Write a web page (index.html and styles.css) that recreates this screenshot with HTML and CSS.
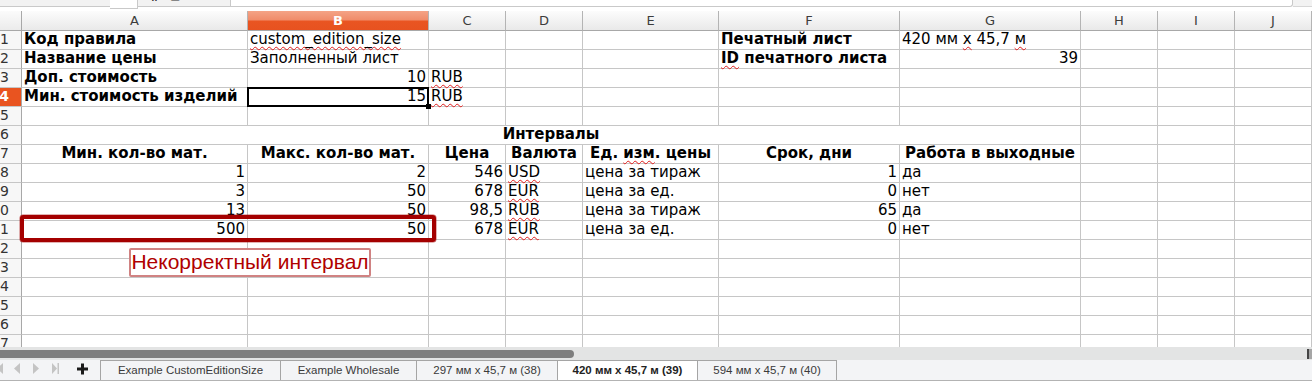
FILE: index.html
```html
<!DOCTYPE html>
<html lang="ru">
<head>
<meta charset="utf-8">
<title>Calc</title>
<link rel="stylesheet" href="styles.css">
</head>
<body>
<div class="top">
  <div class="top-left"></div>
  <div class="top-box"></div>
  <div class="top-gap"><span class="top-icons">#&nbsp;&nbsp;≡</span></div>
  <div class="top-input"></div>
  <div class="top-end"></div>
</div>

<div class="sheet">
  <div class="grid">
    <!-- header -->
    <div class="corner"></div>
    <div class="ch">A</div>
    <div class="ch ch-sel">B</div>
    <div class="ch">C</div>
    <div class="ch">D</div>
    <div class="ch">E</div>
    <div class="ch">F</div>
    <div class="ch">G</div>
    <div class="ch">H</div>
    <div class="ch">I</div>
    <div class="ch">J</div>

    <!-- row 1 -->
    <div class="rh"><span>1</span></div>
    <div class="c b">Код правила</div>
    <div class="c"><span class="sp">custom_edition_size</span></div>
    <div class="c"></div><div class="c"></div><div class="c"></div>
    <div class="c b">Печатный лист</div>
    <div class="c">420 мм <span class="sp">x</span> 45,7 <span class="sp">м</span></div>
    <div class="c"></div><div class="c"></div><div class="c"></div>

    <!-- row 2 -->
    <div class="rh"><span>2</span></div>
    <div class="c b">Название цены</div>
    <div class="c">Заполненный лист</div>
    <div class="c"></div><div class="c"></div><div class="c"></div>
    <div class="c b"><span class="sp">ID</span> печатного листа</div>
    <div class="c r">39</div>
    <div class="c"></div><div class="c"></div><div class="c"></div>

    <!-- row 3 -->
    <div class="rh"><span>3</span></div>
    <div class="c b">Доп. стоимость</div>
    <div class="c r">10</div>
    <div class="c"><span class="sp">RUB</span></div>
    <div class="c"></div><div class="c"></div><div class="c"></div><div class="c"></div>
    <div class="c"></div><div class="c"></div><div class="c"></div>

    <!-- row 4 -->
    <div class="rh rh-sel"><span>4</span></div>
    <div class="c b">Мин. стоимость изделий</div>
    <div class="c r cur">15<div class="cursor"><div class="handle"></div></div></div>
    <div class="c"><span class="sp">RUB</span></div>
    <div class="c"></div><div class="c"></div><div class="c"></div><div class="c"></div>
    <div class="c"></div><div class="c"></div><div class="c"></div>

    <!-- row 5 -->
    <div class="rh"><span>5</span></div>
    <div class="c"></div><div class="c"></div><div class="c"></div><div class="c"></div><div class="c"></div>
    <div class="c"></div><div class="c"></div><div class="c"></div><div class="c"></div><div class="c"></div>

    <!-- row 6 -->
    <div class="rh"><span>6</span></div>
    <div class="c b ctr merged">Интервалы</div>
    <div class="c"></div><div class="c"></div><div class="c"></div>

    <!-- row 7 -->
    <div class="rh"><span>7</span></div>
    <div class="c b ctr">Мин. кол-во мат.</div>
    <div class="c b ctr">Макс. кол-во мат.</div>
    <div class="c b ctr">Цена</div>
    <div class="c b ctr">Валюта</div>
    <div class="c b ctr">Ед. <span class="sp">изм</span>. цены</div>
    <div class="c b ctr">Срок, дни</div>
    <div class="c b ctr">Работа в выходные</div>
    <div class="c"></div><div class="c"></div><div class="c"></div>

    <!-- row 8 -->
    <div class="rh"><span>8</span></div>
    <div class="c r">1</div>
    <div class="c r">2</div>
    <div class="c r">546</div>
    <div class="c"><span class="sp">USD</span></div>
    <div class="c">цена за тираж</div>
    <div class="c r">1</div>
    <div class="c">да</div>
    <div class="c"></div><div class="c"></div><div class="c"></div>

    <!-- row 9 -->
    <div class="rh"><span>9</span></div>
    <div class="c r">3</div>
    <div class="c r">50</div>
    <div class="c r">678</div>
    <div class="c"><span class="sp">EUR</span></div>
    <div class="c">цена за ед.</div>
    <div class="c r">0</div>
    <div class="c">нет</div>
    <div class="c"></div><div class="c"></div><div class="c"></div>

    <!-- row 10 -->
    <div class="rh"><span>10</span></div>
    <div class="c r">13</div>
    <div class="c r">50</div>
    <div class="c r">98,5</div>
    <div class="c"><span class="sp">RUB</span></div>
    <div class="c">цена за тираж</div>
    <div class="c r">65</div>
    <div class="c">да</div>
    <div class="c"></div><div class="c"></div><div class="c"></div>

    <!-- row 11 -->
    <div class="rh"><span>11</span></div>
    <div class="c r">500</div>
    <div class="c r">50</div>
    <div class="c r">678</div>
    <div class="c"><span class="sp">EUR</span></div>
    <div class="c">цена за ед.</div>
    <div class="c r">0</div>
    <div class="c">нет</div>
    <div class="c"></div><div class="c"></div><div class="c"></div>

    <!-- rows 12-17 -->
    <div class="rh"><span>12</span></div>
    <div class="c"></div><div class="c"></div><div class="c"></div><div class="c"></div><div class="c"></div>
    <div class="c"></div><div class="c"></div><div class="c"></div><div class="c"></div><div class="c"></div>
    <div class="rh"><span>13</span></div>
    <div class="c"></div><div class="c"></div><div class="c"></div><div class="c"></div><div class="c"></div>
    <div class="c"></div><div class="c"></div><div class="c"></div><div class="c"></div><div class="c"></div>
    <div class="rh"><span>14</span></div>
    <div class="c"></div><div class="c"></div><div class="c"></div><div class="c"></div><div class="c"></div>
    <div class="c"></div><div class="c"></div><div class="c"></div><div class="c"></div><div class="c"></div>
    <div class="rh"><span>15</span></div>
    <div class="c"></div><div class="c"></div><div class="c"></div><div class="c"></div><div class="c"></div>
    <div class="c"></div><div class="c"></div><div class="c"></div><div class="c"></div><div class="c"></div>
    <div class="rh"><span>16</span></div>
    <div class="c"></div><div class="c"></div><div class="c"></div><div class="c"></div><div class="c"></div>
    <div class="c"></div><div class="c"></div><div class="c"></div><div class="c"></div><div class="c"></div>
    <div class="rh"><span>17</span></div>
    <div class="c"></div><div class="c"></div><div class="c"></div><div class="c"></div><div class="c"></div>
    <div class="c"></div><div class="c"></div><div class="c"></div><div class="c"></div><div class="c"></div>
  </div>

  <div class="err-box"></div>
  <div class="err-label">Некорректный интервал</div>
</div>

<div class="hscroll">
  <div class="thumb"></div>
  <div class="hscroll-end"></div>
</div>

<div class="tabs">
  <div class="nav">
    <svg width="100" height="20" viewBox="0 0 100 20">
      <polygon points="3,3 3,14 -3,8.5" fill="#c4c4c4"/>
      <polygon points="20,3 20,14 14,8.5" fill="#c4c4c4"/>
      <polygon points="33,3 33,14 39,8.5" fill="#c4c4c4"/>
      <polygon points="52,3 52,14 57,8.5" fill="#c4c4c4"/>
      <rect x="57.5" y="3" width="1.5" height="11" fill="#c4c4c4"/>
      <rect x="77" y="7.5" width="11" height="3" fill="#1a1a1a"/>
      <rect x="81" y="3.5" width="3" height="11" fill="#1a1a1a"/>
    </svg>
  </div>
  <div class="tab tab-first w180">Example CustomEditionSize</div>
  <div class="tab w136">Example Wholesale</div>
  <div class="tab w141">297 мм x 45,7 м (38)</div>
  <div class="tab tab-active w140">420 мм x 45,7 м (39)</div>
  <div class="tab w139">594 мм x 45,7 м (40)</div>
</div>
</body>
</html>
```

FILE: styles.css
```css
* { box-sizing: border-box; }

html, body {
  margin: 0;
  padding: 0;
  width: 1312px;
  height: 381px;
  overflow: hidden;
  background: #ffffff;
  font-family: "DejaVu Sans", sans-serif;
}

/* top strip (bottom of formula bar) */
.top {
  display: flex;
  height: 11px;
  background: #ffffff;
}
.top-left {
  width: 110px;
  height: 7px;
  background: #f2f2f2;
  border-bottom: 1px solid #c9c9c9;
}
.top-box {
  width: 28px;
  height: 9px;
  background: #ffffff;
  border-right: 1px solid #c9c9c9;
  border-bottom: 1px solid #c9c9c9;
}
.top-gap {
  width: 92px;
  height: 7px;
  background: #f2f2f2;
  border-bottom: 1px solid #c9c9c9;
  overflow: hidden;
  position: relative;
}
.top-icons {
  display: block;
  margin-left: 12px;
  margin-top: -10px;
  font-size: 13px;
  font-weight: bold;
  line-height: 13px;
  color: #333;
}
.top-input {
  width: 1063px;
  height: 7px;
  background: #ffffff;
  border-bottom: 1px solid #c9c9c9;
  border-left: 1px solid #c9c9c9;
  border-right: 1px solid #c9c9c9;
  border-bottom-right-radius: 3px;
}
.top-end {
  flex: 1;
  height: 7px;
  background: #f2f2f2;
  border-bottom: 1px solid #d6d6d6;
}

/* sheet grid */
.sheet {
  position: relative;
  height: 336px;
  overflow: hidden;
}
.grid {
  display: grid;
  grid-template-columns: 22px 226px 181px 77px 77px 136px 181px 181px 77px 77px 77px;
  grid-template-rows: 20px;
  grid-auto-rows: 19px;
}

.corner {
  background: linear-gradient(#fbfbfb, #ebebeb);
  border-right: 1px solid #a8a8a8;
  border-bottom: 1px solid #a8a8a8;
}
.ch {
  background: linear-gradient(#fcfcfc, #e9e9e9);
  border-right: 1px solid #b4b4b4;
  border-bottom: 1px solid #a8a8a8;
  font-size: 13px;
  line-height: 19px;
  color: #3c3c3c;
  text-align: center;
}
.ch-sel {
  background: linear-gradient(#f4a386 0%, #f08d6b 45%, #e95522 55%, #e75220 100%);
  color: #ffffff;
  font-weight: bold;
}

.rh {
  display: flex;
  justify-content: flex-end;
  overflow: hidden;
  padding-right: 12px;
  background: #f7f7f7;
  border-right: 1px solid #a8a8a8;
  border-bottom: 1px solid #c6c6c6;
  font-size: 14px;
  line-height: 16px;
  color: #333333;
  white-space: nowrap;
}
.rh-sel {
  background: #e95420;
  color: #ffffff;
  font-weight: bold;
}

.c {
  border-right: 1px solid #c6c6c6;
  border-bottom: 1px solid #c6c6c6;
  padding: 0 2px;
  font-size: 15px;
  line-height: 16px;
  color: #000000;
  white-space: nowrap;
}
.b { font-weight: bold; }
.r { text-align: right; }
.ctr { text-align: center; }
.merged { grid-column: span 7; }

.sp {
  text-decoration-line: underline;
  text-decoration-style: wavy;
  text-decoration-color: #e01b1b;
  text-decoration-thickness: 1px;
  text-underline-offset: 2px;
  text-decoration-skip-ink: none;
}

.cur { position: relative; }
.cursor {
  position: absolute;
  left: -1px;
  top: -1px;
  right: -1px;
  bottom: -1px;
  border: 2px solid #000000;
}
.handle {
  position: absolute;
  right: -4px;
  bottom: -4px;
  width: 5px;
  height: 5px;
  background: #000000;
}

/* error overlay */
.err-box {
  position: absolute;
  left: 20px;
  top: 204px;
  width: 416px;
  height: 27px;
  border: 4px solid #a40000;
  border-radius: 3px;
  box-shadow: 0 0 0 0.5px rgba(164, 0, 0, 0.6);
}
.err-label {
  position: absolute;
  left: 129px;
  top: 237px;
  width: 242px;
  height: 29px;
  border: 2px solid #d08282;
  border-radius: 2px;
  background: #ffffff;
  font-family: "Liberation Sans", Arial, sans-serif;
  font-size: 21px;
  line-height: 24px;
  color: #b00000;
  text-align: center;
}

/* horizontal scrollbar */
.hscroll {
  display: flex;
  align-items: center;
  height: 13px;
  background: #e3e4e4;
  position: relative;
}
.thumb {
  width: 574px;
  height: 8px;
  background: #7e7e7e;
  border-radius: 0 4px 4px 0;
}
.hscroll-end {
  margin-left: auto;
  width: 5px;
  height: 10px;
  background: #a6a6a6;
  border-left: 2px solid #444;
  border-right: 2px solid #a6a6a6;
}

/* sheet tabs */
.tabs {
  display: flex;
  height: 21px;
  background: #f3f4f6;
  border-bottom: 1px solid #b3b3b3;
}
.nav {
  width: 100px;
  height: 20px;
  overflow: hidden;
}
.nav svg { display: block; }
.tab {
  height: 20px;
  border-top: 1px solid #a5a5a5;
  border-right: 1px solid #a5a5a5;
  font-family: "Liberation Sans", Arial, sans-serif;
  font-size: 11.5px;
  line-height: 19px;
  color: #3a3a3a;
  text-align: center;
  white-space: nowrap;
}
.tab-first { border-left: 1px solid #a5a5a5; }
.tab-active {
  background: #ffffff;
  font-weight: bold;
  color: #222222;
}
.w180 { width: 181px; }
.w136 { width: 136px; }
.w141 { width: 141px; }
.w140 { width: 140px; }
.w139 { width: 139px; }
```
